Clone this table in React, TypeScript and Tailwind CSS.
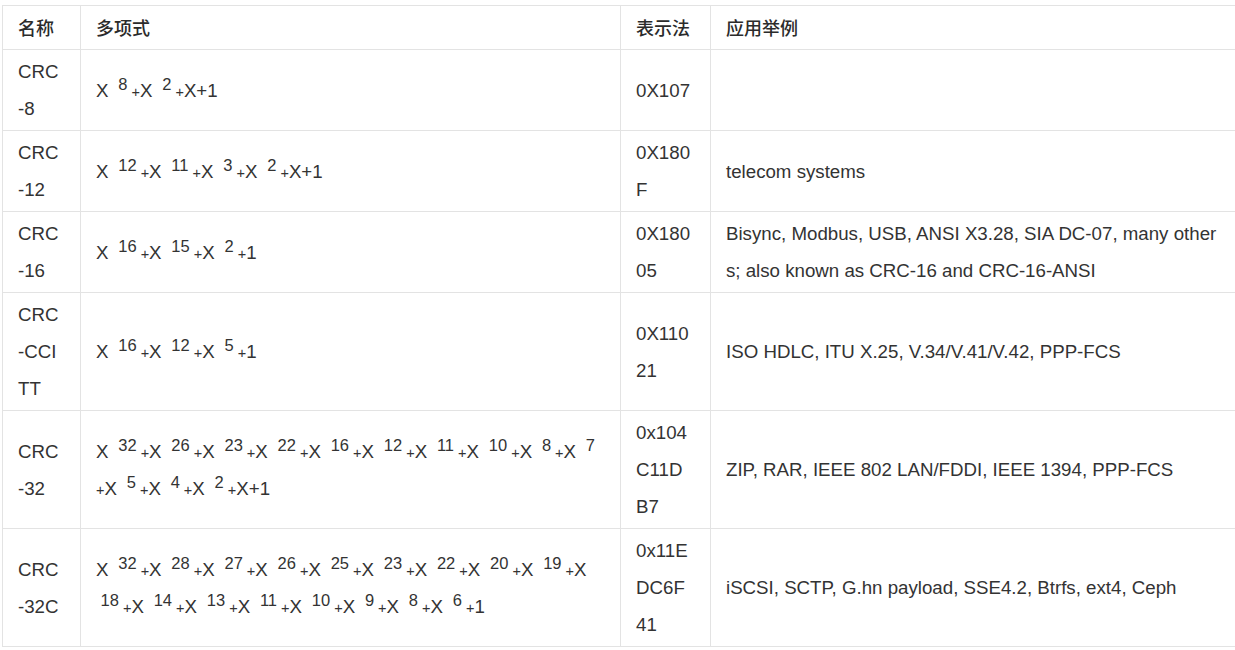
import React from "react";

type Row = {
  name: string[];
  poly: string[];
  hex: string[];
  usage: string[];
};

const rows: Row[] = [
  { name: ["CRC", "-8"], poly: ["X^8+X^2+X+1"], hex: ["0X107"], usage: [] },
  { name: ["CRC", "-12"], poly: ["X^12+X^11+X^3+X^2+X+1"], hex: ["0X180", "F"], usage: ["telecom systems"] },
  {
    name: ["CRC", "-16"],
    poly: ["X^16+X^15+X^2+1"],
    hex: ["0X180", "05"],
    usage: ["Bisync, Modbus, USB, ANSI X3.28, SIA DC-07, many other", "s; also known as CRC-16 and CRC-16-ANSI"],
  },
  {
    name: ["CRC", "-CCI", "TT"],
    poly: ["X^16+X^12+X^5+1"],
    hex: ["0X110", "21"],
    usage: ["ISO HDLC, ITU X.25, V.34/V.41/V.42, PPP-FCS"],
  },
  {
    name: ["CRC", "-32"],
    poly: ["X^32+X^26+X^23+X^22+X^16+X^12+X^11+X^10+X^8+X^7", "+X^5+X^4+X^2+X+1"],
    hex: ["0x104", "C11D", "B7"],
    usage: ["ZIP, RAR, IEEE 802 LAN/FDDI, IEEE 1394, PPP-FCS"],
  },
  {
    name: ["CRC", "-32C"],
    poly: ["X^32+X^28+X^27+X^26+X^25+X^23+X^22+X^20+X^19+X", "^18+X^14+X^13+X^11+X^10+X^9+X^8+X^6+1"],
    hex: ["0x11E", "DC6F", "41"],
    usage: ["iSCSI, SCTP, G.hn payload, SSE4.2, Btrfs, ext4, Ceph"],
  },
];

// turns "X^8+X^2+X+1" into X, raised exponent, and the small plus that follows it
function PolyLine({ line }: { line: string }) {
  const tokens = line.match(/\^\d+|\+|X|\d+/g) ?? [];
  const out: React.ReactNode[] = [];
  tokens.forEach((t, i) => {
    const prev = tokens[i - 1];
    if (t.startsWith("^")) {
      out.push(
        <span key={i}>
          {prev === "X" ? " " : ""}
          <span className="relative -top-[7px] text-[16.5px] leading-none">{"\u00a0" + t.slice(1)}</span>
        </span>
      );
    } else if (t === "+") {
      if (prev === "X") {
        out.push(<span key={i}>+</span>);
      } else {
        out.push(
          <span key={i} className="text-[14.5px] leading-none">
            {" +"}
          </span>
        );
      }
    } else {
      out.push(<span key={i}>{t}</span>);
    }
  });
  return <div>{out}</div>;
}

function Lines({ lines }: { lines: string[] }) {
  return (
    <>
      {lines.map((l, i) => (
        <div key={i}>{l}</div>
      ))}
    </>
  );
}

export default function App() {
  const cell = "border border-[#e3e3e3] px-[15px] py-[3px] align-middle";
  return (
    <div
      className="w-[1235px] h-[650px] overflow-hidden bg-white pt-[5px] pl-[2px] text-[18.7px] leading-[37px] text-[#333]"
      style={{ fontFamily: '"Liberation Sans", Arial, "Noto Sans CJK SC", sans-serif' }}
    >
      <table className="table-fixed border-collapse w-[1240px]">
        <colgroup>
          <col className="w-[78px]" />
          <col className="w-[540px]" />
          <col className="w-[90px]" />
          <col className="w-[532px]" />
        </colgroup>
        <thead>
          <tr className="text-left text-[18px] text-[#2b2b2b]" style={{ fontFamily: '"Noto Sans CJK SC", sans-serif' }}>
            <th className={cell + " font-medium"}>名称</th>
            <th className={cell + " font-medium"}>多项式</th>
            <th className={cell + " font-medium"}>表示法</th>
            <th className={cell + " font-medium"}>应用举例</th>
          </tr>
        </thead>
        <tbody>
          {rows.map((r) => (
            <tr key={r.name.join("")}>
              <td className={cell}>
                <Lines lines={r.name} />
              </td>
              <td className={cell}>
                {r.poly.map((l, i) => (
                  <PolyLine key={i} line={l} />
                ))}
              </td>
              <td className={cell}>
                <Lines lines={r.hex} />
              </td>
              <td className={cell}>
                <Lines lines={r.usage} />
              </td>
            </tr>
          ))}
        </tbody>
      </table>
    </div>
  );
}
